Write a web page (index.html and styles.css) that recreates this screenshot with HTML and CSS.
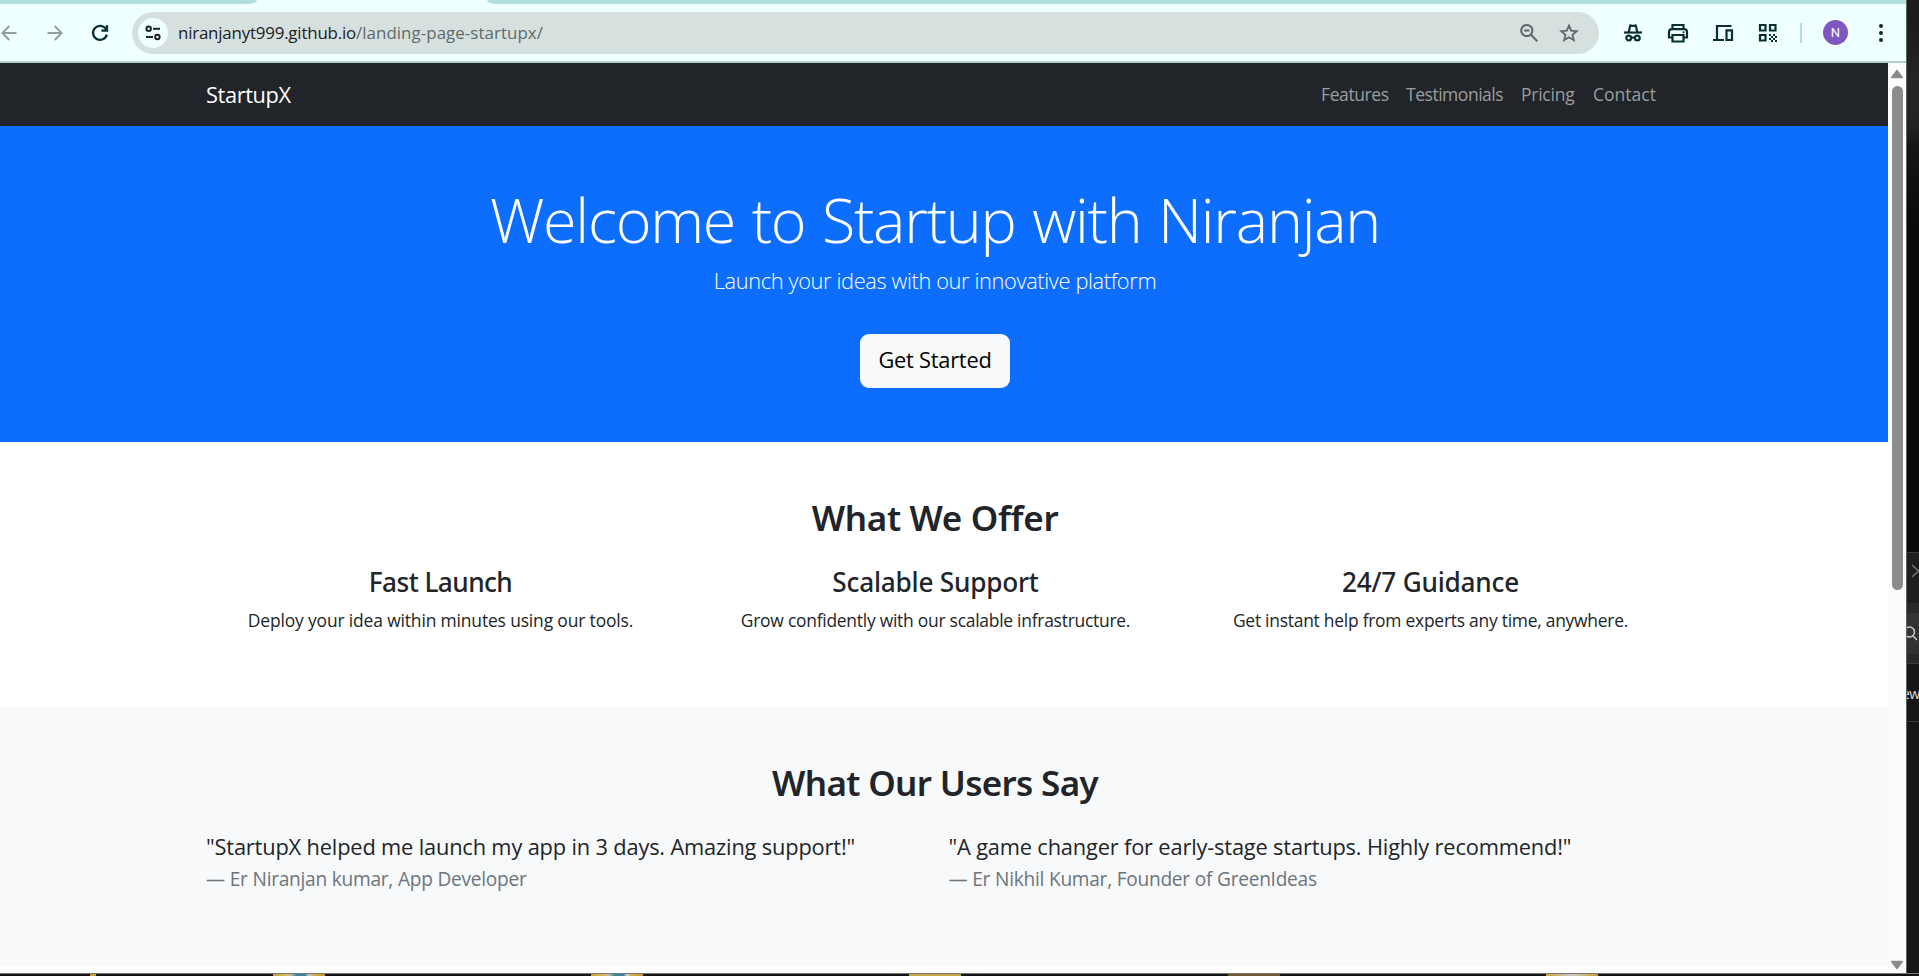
FILE: index.html
```
<!DOCTYPE html>
<html lang="en">
<head>
<meta charset="utf-8">
<title>StartupX</title>
<link rel="stylesheet" href="styles.css">
</head>
<body>
<div class="desktop">
  <div class="window">
    <div class="tabs"><span class="tab-left"></span><span class="tab-right"></span></div>
    <header class="toolbar">
      <svg class="ic back" width="16" height="16" viewBox="0 0 16 16"><path d="M15.5 8H1.5M8.3 1 1.3 8l7 7"/></svg>
      <svg class="ic forward" width="16" height="16" viewBox="0 0 16 16"><path d="M.5 8h14M7.7 1l7 7-7 7"/></svg>
      <svg class="ic reload" width="18" height="18" viewBox="0 0 18 18"><path d="M15 5.2A7 7 0 1 0 15.8 10.6M16 1.2V6.6H10.4"/></svg>
      <div class="omnibox">
        <span class="site"><svg width="16" height="16" viewBox="0 0 16 16"><circle cx="3.7" cy="3.8" r="2.2"/><path d="M8 3.8h7"/><path d="M1 12h7"/><circle cx="12.4" cy="12" r="2.2"/></svg></span>
        <span class="url"><span class="host">niranjanyt999.github.io</span><span class="path">/landing-page-startupx/</span></span>
        <svg class="zoom-icon" width="20" height="20" viewBox="0 0 20 20"><circle cx="7.8" cy="7.5" r="5.6"/><path d="M5.2 7.5h5.2M12 11.8l6.3 6.4"/></svg>
        <svg class="star" width="20" height="20" viewBox="0 0 20 20"><path d="M10 2.6l2.2 5.1 5.5.5-4.2 3.6 1.3 5.4L10 14.3l-4.8 2.9 1.3-5.4L2.3 8.2l5.5-.5z"/></svg>
      </div>
      <div class="actions">
        <svg width="22" height="20" viewBox="0 0 22 20"><path d="M2 9.500h18"/><path class="dot" d="M5.500 9.500 7.300 1.800q.4-1 1.400-.5 2.300 1 4.600 0 1-.5 1.400.5L16.500 9.500z"/><path class="hole" d="M8 8.400 9 3.700q2 .6 4 0l1 4.700z"/><circle cx="6.700" cy="15" r="2.400"/><circle cx="15.300" cy="15" r="2.400"/><path d="M9 14.600h4"/></svg>
        <svg width="22" height="20" viewBox="0 0 22 20"><path d="M5.500 6V2h11v4M5.500 14.500H2V9q0-2.800 2.800-2.800h12.400Q20 6.200 20 9v5.500h-3.500M5.500 12h11v6.500h-11z"/><circle class="dot" cx="16.500" cy="9.300" r="1"/></svg>
        <svg width="22" height="20" viewBox="0 0 22 20"><path d="M19.500 3H5v13.500M1 17h11M14.500 7.300h5.500v9.700h-5.500z"/></svg>
        <svg width="22" height="20" viewBox="0 0 22 20"><path d="M3 2h5.500v5.500H3zM13 2h5.500v5.500H13zM3 12h5.500v5.500H3z"/><path class="dot" d="M12 11h2v2h-2zM16 11h2v2h-2zM14 13h2v2h-2zM18 13h2v2h-2zM12 15h2v2h-2zM16 15h2v2h-2zM14 17h2v2h-2zM18 17h2v2h-2z"/></svg>
      </div>
      <span class="divider"></span>
      <span class="avatar">N</span>
      <svg class="more" width="6" height="20" viewBox="0 0 6 20"><circle cx="3" cy="3" r="2"/><circle cx="3" cy="10" r="2"/><circle cx="3" cy="17" r="2"/></svg>
    </header>
    <div class="viewport">
      <main class="page">
        <nav class="navbar">
          <span class="brand">StartupX</span>
          <div class="links"><a class="l-features">Features</a><a class="l-testimonials">Testimonials</a><a class="l-pricing">Pricing</a><a class="l-contact">Contact</a></div>
        </nav>
        <section class="hero">
          <h1>Welcome to Startup with Niranjan</h1>
          <p>Launch your ideas with our innovative platform</p>
          <a class="btn">Get Started</a>
        </section>
        <section class="offer">
          <h2>What We Offer</h2>
          <div class="features">
            <div class="feature fast"><h3>Fast Launch</h3><p>Deploy your idea within minutes using our tools.</p></div>
            <div class="feature scalable"><h3>Scalable Support</h3><p>Grow confidently with our scalable infrastructure.</p></div>
            <div class="feature guidance"><h3>24/7 Guidance</h3><p>Get instant help from experts any time, anywhere.</p></div>
          </div>
        </section>
        <section class="testimonials">
          <h2>What Our Users Say</h2>
          <div class="quotes">
            <blockquote><p>"StartupX helped me launch my app in 3 days. Amazing support!"</p><footer>— Er Niranjan kumar, App Developer</footer></blockquote>
            <blockquote><p>"A game changer for early-stage startups. Highly recommend!"</p><footer>— Er Nikhil Kumar, Founder of GreenIdeas</footer></blockquote>
          </div>
        </section>
      </main>
      <div class="scrollbar">
        <svg width="14" height="10" viewBox="0 0 14 10"><path d="M7 1.500 12.300 8.500H1.700z"/></svg>
        <span class="thumb"></span>
        <svg class="down" width="14" height="10" viewBox="0 0 14 10"><path d="M7 8.500 1.700 1.500h10.600z"/></svg>
      </div>
    </div>
  </div>
  <aside class="behind">
    <div class="backdrop"></div>
    <div class="row close"><svg width="12" height="14" viewBox="0 0 12 14"><path d="M5 1l6.500 6L5 13"/></svg></div>
    <div class="gap"></div>
    <div class="row search"><svg width="12" height="16" viewBox="0 0 12 16"><circle cx="2.500" cy="7" r="5"/><path d="M6 11l4 4"/></svg></div>
    <div class="gap small"></div>
    <div class="row label"><span>ew</span></div>
  </aside>
  <div class="taskbar">
    <span class="tile mark"></span><span class="tile t1"></span><span class="tile t2"></span><span class="tile t3"></span><span class="tile t4"></span><span class="tile t5"></span>
  </div>
</div>
</body>
</html>
```
FILE: styles.css
```
* { box-sizing: border-box; }
body { margin: 0; background: #141414; font-family: "Open Sans", "Noto Sans", sans-serif; overflow: hidden; }
h1, h2, h3, p, blockquote { margin: 0; }
svg { display: block; flex: none; }

.desktop { display: grid; grid-template-columns: 1907px 12px; grid-template-rows: 973px 3px; width: 1919px; height: 976px; }
.window { display: flex; flex-direction: column; background: #fff; border-right: 1px solid #596563; white-space: nowrap; overflow: hidden; }

/* Browser chrome */
.tabs { height: 4px; flex: none; display: flex; justify-content: space-between; background: #f0ffff; }
.tab-left { width: 257px; background: #b2dfdb; border-bottom-right-radius: 12px 5px; }
.tab-right { width: 1419px; background: #b2dfdb; border-bottom-left-radius: 12px 5px; }
.toolbar { height: 59px; flex: none; display: flex; align-items: center; background: #f0ffff; border-bottom: 2px solid #b5cecb; padding-left: 1px; }
.ic { fill: none; stroke: #8ba3a1; stroke-width: 2; }
.forward { margin-left: 30px; }
.reload { margin-left: 28px; stroke: #06312f; stroke-width: 2.300; }
.omnibox { width: 1467px; height: 42px; margin-left: 23px; padding-left: 6px; border-radius: 21px; background: #d5e0df; display: flex; align-items: center; }
.site { width: 30px; height: 30px; border-radius: 50%; background: #f0ffff; display: grid; place-items: center; }
.site svg { fill: none; stroke: #202124; stroke-width: 2; }
.url { margin-left: 10px; padding-top: 1px; font-size: 16.900px; line-height: 24px; color: #202124; }
.host { letter-spacing: -0.200px; }
.path { color: #5f6a69; letter-spacing: 0.060px; }
.zoom-icon, .star { fill: none; stroke: #5f6668; stroke-width: 2; }
.zoom-icon { margin-left: auto; }
.star { margin-left: 20px; margin-right: 20px; stroke-width: 1.800; }
.actions { display: flex; gap: 23px; margin-left: 23px; }
.actions svg { fill: none; stroke: #06312f; stroke-width: 2.200; }
.actions .dot { fill: #06312f; stroke: none; }
.actions .hole { fill: #f0ffff; stroke: none; }
.divider { width: 2px; height: 20px; margin-left: 21px; background: #b2dfdb; }
.avatar { width: 25px; height: 25px; margin-left: 21px; border-radius: 50%; background: #7e57c2; color: #fff; font: 13px/25px Roboto, sans-serif; text-align: center; }
.more { margin-left: 30px; fill: #06312f; }

/* Page */
.viewport { display: flex; flex: 1; min-height: 0; }
.page { width: 1888px; }
.navbar { height: 63px; background: #212529; display: flex; align-items: center; justify-content: space-between; padding: 0 233px 1px 206px; }
.brand { color: #fff; font-size: 21.800px; letter-spacing: -0.400px; }
.links { display: flex; gap: 18px; color: #9b9d9e; font-size: 17.500px; }
.l-features { width: 67px; letter-spacing: -0.400px; }
.l-testimonials { width: 97px; letter-spacing: -0.470px; }
.l-pricing { width: 54px; letter-spacing: -0.250px; }
.l-contact { width: 62px; }
.hero, .offer, .testimonials { padding-right: 18px; text-align: center; }
.hero { height: 316px; padding-top: 56px; background: #0d6efd; color: #fff; display: flex; flex-direction: column; align-items: center; }
.hero h1 { font-size: 61px; font-weight: 300; line-height: 76px; letter-spacing: -1.250px; word-spacing: 2px; }
.hero p { margin-top: 6px; font-size: 21.800px; font-weight: 300; line-height: 34px; letter-spacing: -0.365px; }
.btn { width: 150px; height: 54px; margin-top: 36px; border-radius: 9px; background: #f8f9fa; color: #000; font-size: 21.800px; line-height: 52px; letter-spacing: -0.240px; }
.offer, .testimonials { color: #212529; padding-top: 54px; }
.offer { height: 265px; background: #fff; }
h2 { font: 560 35px/43px "Noto Sans", sans-serif; }
.offer h2 { letter-spacing: -0.340px; }
.testimonials h2 { letter-spacing: -0.670px; }
.features { display: grid; grid-template-columns: repeat(3, 495px); padding-left: 193px; margin-top: 27px; }
h3 { font: 540 26.200px/33px "Noto Sans", sans-serif; }
.feature p { margin-top: 8px; font-size: 17.460px; line-height: 27px; }
.fast h3 { letter-spacing: -0.550px; }
.fast p { letter-spacing: -0.150px; }
.scalable h3, .guidance h3 { letter-spacing: -0.220px; }
.scalable p, .guidance p { letter-spacing: -0.255px; }
.testimonials { height: 259px; background: #f8f9fa; }
.quotes { display: grid; grid-template-columns: repeat(2, 742.500px); padding-left: 206px; margin-top: 26px; text-align: left; }
.quotes p { font-size: 21.820px; line-height: 34px; letter-spacing: -0.170px; }
.quotes footer { font-size: 19.100px; line-height: 30px; color: #6c757d; letter-spacing: -0.260px; word-spacing: .2px; }

.scrollbar { width: 18px; display: flex; flex-direction: column; align-items: center; padding: 6px 0 3px; background: #fcfcfc; }
.scrollbar svg { fill: #8b8b8b; stroke: #8b8b8b; stroke-width: 1.500; stroke-linejoin: round; }
.thumb { width: 11px; height: 504px; margin-top: 7px; border-radius: 6px; background: #8b8b8b; }
.down { margin-top: auto; }

/* Windows underneath */
.behind { grid-column: 2; grid-row: 1; overflow: hidden; background: #161616; }
.backdrop { height: 552px; background: linear-gradient(#1b1b1b 0, #1e1e1e 40px, #252525 80px, #232323 125px, #161616 145px, #0a0a0a 220px, #0a0a0a 100%); }
.row { border-top: 1px solid #3a3a3a; }
.row svg { fill: none; stroke: #ccc; stroke-width: 1.500; }
.close { height: 51px; background: #1e1e1e; padding-top: 11px; }
.close svg { stroke: #777; }
.gap { height: 10px; background: #282828; }
.gap.small { height: 9px; }
.search { height: 41px; background: #333; padding-top: 12px; border: 0; }
.label { height: 59px; border-bottom: 1px solid #3a3a3a; color: #ddd; font-size: 14px; line-height: 60px; }
.label span { margin-left: -5px; letter-spacing: -.5px; }
.taskbar { grid-column: 1 / 3; grid-row: 2; display: flex; background: #141414; border-top: 1px solid #777; }
.tile { width: 52px; height: 2px; flex: none; background: linear-gradient(90deg, #c9a227 0, #d8bd6d 15px, #b8bcbc 18px, #3d8296 24px, #3d8296 32px, #d0d0d0 36px, #d0ae50 40px, #c9961e 100%); }
.mark { width: 6px; margin-left: 90px; background: #c9a227; }
.t1 { margin-left: 177px; }
.t2 { margin-left: 266px; }
.t3 { margin-left: 266px; background: #c4a548; }
.t4 { margin-left: 267px; background: #6f5930; }
.t5 { margin-left: 266px; background: linear-gradient(90deg, #cfa234, #c9c9c9 50%, #cf9c28); }
```
